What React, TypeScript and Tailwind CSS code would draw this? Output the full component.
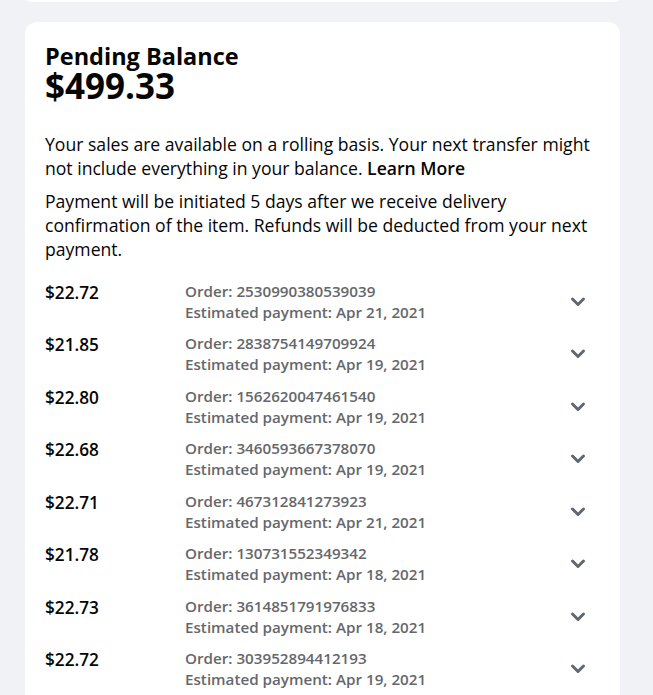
import React from "react";

const rows = [
  { amt: "$22.72", order: "2530990380539039", date: "Apr 21, 2021" },
  { amt: "$21.85", order: "2838754149709924", date: "Apr 19, 2021" },
  { amt: "$22.80", order: "1562620047461540", date: "Apr 19, 2021" },
  { amt: "$22.68", order: "3460593667378070", date: "Apr 19, 2021" },
  { amt: "$22.71", order: "467312841273923", date: "Apr 21, 2021" },
  { amt: "$21.78", order: "130731552349342", date: "Apr 18, 2021" },
  { amt: "$22.73", order: "3614851791976833", date: "Apr 18, 2021" },
  { amt: "$22.72", order: "303952894412193", date: "Apr 19, 2021" },
];

function Chevron() {
  return (
    <svg width="16" height="12" viewBox="0 0 16 12" className="block">
      <path d="M2.5 3 L8 8.5 L13.5 3" fill="none" stroke="#606770" strokeWidth="3" strokeLinecap="round" strokeLinejoin="round" />
    </svg>
  );
}

export default function App() {
  return (
    <div className="h-[695px] bg-[#f0f2f5] overflow-hidden" style={{ fontFamily: '"Open Sans", "Noto Sans", sans-serif' }}>
      <div className="ml-[25px] w-[595px] h-[12px] -mt-[10px] bg-white rounded-xl" />
      <div className="ml-[25px] mt-[20px] w-[595px] bg-white rounded-xl px-[20px] pt-[22px] pb-[20px] text-[#050505]">
        <div className="text-[23.5px] font-bold leading-[24px]">Pending Balance</div>
        <div className="text-[35px] font-bold leading-[36px]">$499.33</div>
        <p className="mt-[28px] text-[17.6px] leading-[24px]">
          Your sales are available on a rolling basis. Your next transfer might not include everything in your balance.{" "}
          <span className="font-semibold">Learn More</span>
        </p>
        <p className="mt-[9px] text-[17.6px] leading-[24px]">
          Payment will be initiated 5 days after we receive delivery confirmation of the item. Refunds will be deducted from your next payment.
        </p>
        <div className="mt-[20px] flex flex-col">
          {rows.map((r, i) => (
            <div key={i} className="flex items-start h-[52.43px]">
              <div className="w-[140px] text-[17.2px] leading-[24px] font-semibold">{r.amt}</div>
              <div className="flex-1 text-[15.2px] leading-[21px] text-[#65676b] font-semibold">
                <div>Order: {r.order}</div>
                <div>Estimated payment: {r.date}</div>
              </div>
              <div className="mr-[14px] mt-[15px]">
                <Chevron />
              </div>
            </div>
          ))}
        </div>
      </div>
    </div>
  );
}
